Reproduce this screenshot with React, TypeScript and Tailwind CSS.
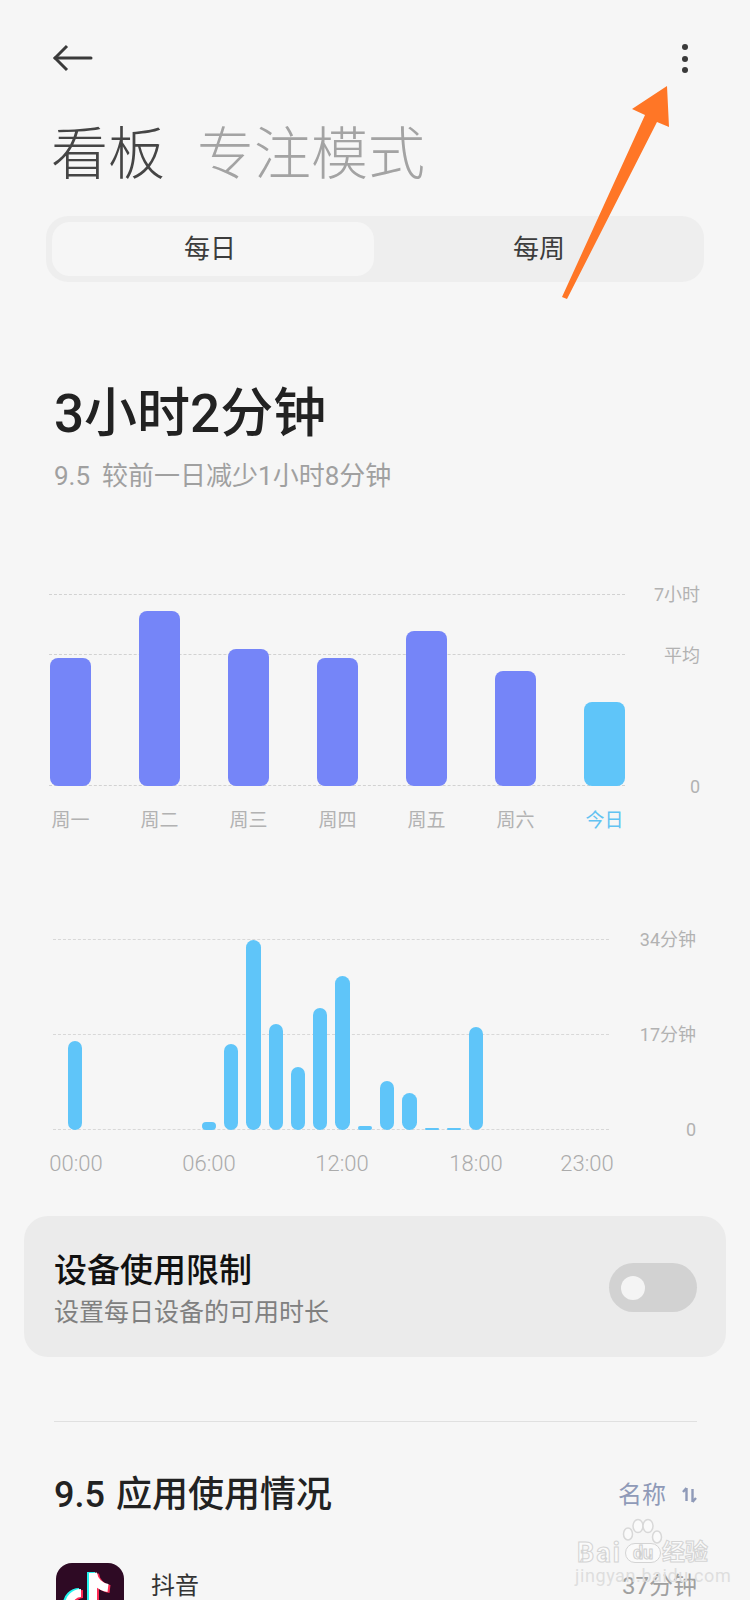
const sans = { fontFamily: 'Roboto, "Noto Sans CJK SC", sans-serif' };

const weekBars = [
  { nom: "周一", top: 658 },
  { nom: "周二", top: 611 },
  { nom: "周三", top: 649 },
  { nom: "周四", top: 658 },
  { nom: "周五", top: 631 },
  { nom: "周六", top: 671 },
  { nom: "今日", top: 702, today: true },
];

const hourBars = [89, 0, 0, 0, 0, 0, 8, 86, 190, 106, 63, 122, 154, 4, 49, 37, 2, 2, 103];

const timeLabels = [
  { t: "00:00", cls: "w-[60px] text-center" },
  { t: "06:00", cls: "ml-[73px] w-[60px] text-center" },
  { t: "12:00", cls: "ml-[73px] w-[60px] text-center" },
  { t: "18:00", cls: "ml-[74px] w-[60px] text-center" },
  { t: "23:00", cls: "ml-[51px] w-[60px] text-center" },
];

const App = () => {
  return (
    <div style={sans} className="relative h-[1600px] w-[750px] overflow-hidden bg-[#f6f6f6]">
      {/* top bar */}
      <div className="flex h-[123px] items-start justify-between pl-[53px] pr-[62px] pt-[44px]">
        <svg width="40" height="28" viewBox="0 0 40 28" fill="none" stroke="#3a3a3a" strokeWidth="3">
          <path d="M14 2 L2 14 L14 26" />
          <path d="M2 14 H38" strokeLinecap="round" />
        </svg>
        <div className="flex flex-col gap-[5.5px]">
          <span className="h-[6px] w-[6px] rounded-full bg-[#3a3a3a]"></span>
          <span className="h-[6px] w-[6px] rounded-full bg-[#3a3a3a]"></span>
          <span className="h-[6px] w-[6px] rounded-full bg-[#3a3a3a]"></span>
        </div>
      </div>

      {/* title */}
      <div className="flex h-[64px] items-center pl-[51px] text-[57px] font-light leading-[64px]">
        <span className="text-[#454545]">看板</span>
        <span className="ml-[32px] text-[#a3a3a3]">专注模式</span>
      </div>

      {/* tabs */}
      <div className="ml-[46px] mt-[29px] flex h-[66px] w-[658px] items-center rounded-[22px] bg-[#eeeeee] px-[6px]">
        <div className="flex h-[54px] w-[322px] items-center justify-center rounded-[18px] bg-[#f6f6f6] pr-[6px] text-[26px] text-[#3c3c3c]">
          每日
        </div>
        <div className="flex h-[54px] flex-1 items-center justify-center pl-[6px] text-[26px] text-[#3c3c3c]">每周</div>
      </div>

      {/* total */}
      <div className="ml-[54px] mt-[97px] text-[53px] font-medium leading-[70px] text-[#222222]">3小时2分钟</div>
      <div className="ml-[54px] mt-[10px] text-[26px] leading-[34px] text-[#a0a0a0]">
        <span className="mr-[12px]">9.5</span>较前一日减少1小时8分钟
      </div>

      {/* week chart */}
      <div className="ml-[49px] mt-[101px] flex">
        <div className="w-[576px]">
          <div className="relative h-[192px]">
            <div className="absolute left-0 right-0 top-0 border-t border-dashed border-[#d2d2d2]"></div>
            <div className="absolute left-0 right-0 top-[60px] border-t border-dashed border-[#d2d2d2]"></div>
            <div className="absolute bottom-0 left-0 right-0 border-t border-dashed border-[#d2d2d2]"></div>
            <div className="relative flex h-full items-end justify-between pl-px">
              {weekBars.map((data) => (
                <div
                  key={data.nom}
                  style={{ height: 786 - data.top }}
                  className={data.today ? "w-[41px] rounded-[8px] bg-[#5fc5f9]" : "w-[41px] rounded-[8px] bg-[#7585f8]"}
                ></div>
              ))}
            </div>
          </div>
          <div className="mt-[22px] flex justify-between pl-px">
            {weekBars.map((data) => (
              <div
                key={data.nom}
                className={
                  data.today
                    ? "w-[41px] whitespace-nowrap text-center text-[19px] leading-[26px] text-[#62c3f2]"
                    : "w-[41px] whitespace-nowrap text-center text-[19px] leading-[26px] text-[#b2b2b2]"
                }
              >
                {data.nom}
              </div>
            ))}
          </div>
        </div>
        <div className="ml-auto mr-[50px] mt-[-10px] flex flex-col items-end text-[18px] leading-[22px] text-[#b2b2b2]">
          <span>7小时</span>
          <span className="mt-[39px]">平均</span>
          <span className="mt-[109px]">0</span>
        </div>
      </div>

      {/* hour chart */}
      <div className="ml-[53px] mt-[105px] flex">
        <div className="w-[556px]">
          <div className="relative h-[191px]">
            <div className="absolute left-0 right-0 top-0 border-t border-dashed border-[#d8d8d8]"></div>
            <div className="absolute left-0 right-0 top-[95px] border-t border-dashed border-[#d8d8d8]"></div>
            <div className="absolute bottom-0 left-0 right-0 border-t border-dashed border-[#d8d8d8]"></div>
            <div className="relative flex h-full items-end gap-[7.9px] pl-[15px]">
              {hourBars.map((h, i) => (
                <div key={i} style={{ height: h }} className="w-[14.4px] rounded-full bg-[#5fc5f9]"></div>
              ))}
            </div>
          </div>
        </div>
        <div className="ml-auto mr-[54px] mt-[-10px] flex flex-col items-end text-[18px] leading-[22px] text-[#b2b2b2]">
          <span>34分钟</span>
          <span className="mt-[73px]">17分钟</span>
          <span className="mt-[73px]">0</span>
        </div>
      </div>
      <div className="ml-[46px] mt-[9px] flex text-[22px] font-light leading-[28px] text-[#ababab]">
        {timeLabels.map((data) => (
          <span key={data.t} className={data.cls}>
            {data.t}
          </span>
        ))}
      </div>

      {/* limit card */}
      <div className="ml-[24px] mt-[38px] flex h-[141px] w-[702px] items-center justify-between rounded-[24px] bg-[#ebebeb] pl-[30px] pr-[29px]">
        <div className="pt-[6px]">
          <p className="text-[33px] font-medium leading-[44px] text-[#111111]">设备使用限制</p>
          <p className="mt-[2px] text-[25px] leading-[36px] text-[#808080]">设置每日设备的可用时长</p>
        </div>
        <div className="mt-[2px] flex h-[49px] w-[88px] items-center rounded-full bg-[#d2d2d2] pl-[12px]">
          <span className="h-[24px] w-[24px] rounded-full bg-[#f4f4f4]"></span>
        </div>
      </div>

      <div className="ml-[54px] mt-[64px] h-px w-[643px] bg-[#e0e0e0]"></div>

      {/* app usage */}
      <div className="ml-[54px] mt-[48px] flex w-[643px] items-center justify-between">
        <span className="text-[36px] font-medium leading-[50px] text-[#222222]">
          <span className="mr-[11px]">9.5</span>应用使用情况
        </span>
        <div className="flex items-center gap-[16px] text-[24px] text-[#8f9ab8]">
          <span>名称</span>
          <svg width="15" height="16" viewBox="0 0 15 16" fill="none" stroke="#8f9ab8" strokeWidth="2.4">
            <path d="M4.5 1 V14 M4.5 1 L1 5" />
            <path d="M10.5 15 V2 M10.5 15 L14 11" />
          </svg>
        </div>
      </div>

      <div className="ml-[56px] mt-[43px] flex w-[641px] items-start">
        <div className="h-[68px] w-[68px] shrink-0 overflow-hidden rounded-[16px] bg-[#2e0a24]">
          <svg width="68" height="68" viewBox="0 0 68 68" fill="none" strokeWidth="8">
            <path d="M37 10 V42 a12 12 0 1 1 -12 -12" stroke="#25f4ee" transform="translate(-2 -1)" />
            <path d="M37 10 V42 a12 12 0 1 1 -12 -12 M37 10 c1 8 7 14 15 15" stroke="#fe2c55" transform="translate(2 1)" />
            <path d="M37 10 V42 a12 12 0 1 1 -12 -12 M37 10 c1 8 7 14 15 15" stroke="#ffffff" />
          </svg>
        </div>
        <span className="ml-[27px] mt-[9px] text-[24px] leading-[28px] text-[#333333]">抖音</span>
        <span className="ml-auto mt-[9px] text-[24px] leading-[28px] text-[#a0a0a0]">37分钟</span>
      </div>

      {/* arrow overlay */}
      <svg className="absolute left-0 top-0" width="750" height="320" viewBox="0 0 750 320">
        <path d="M667 86 L632 109 L645 115 L562 297 L567 299 L657 122 L669 127 Z" fill="#ff7626" />
      </svg>

      {/* watermark */}
      <div className="absolute left-[575px] top-[1518px] h-[66px] w-[134px]">
        <svg className="absolute left-[45px] top-0" width="46" height="30" viewBox="0 0 46 30" fill="#fafafa" stroke="#d8d8d8" strokeWidth="1.5">
          <ellipse cx="8" cy="16" rx="4.5" ry="6" />
          <ellipse cx="18" cy="8" rx="5" ry="6.5" />
          <ellipse cx="28" cy="8" rx="5" ry="6.5" />
          <ellipse cx="37" cy="19" rx="4.5" ry="6" />
        </svg>
        <span className="absolute left-[2px] top-[20px] text-[27px] font-bold leading-[30px] tracking-[2px] text-[#fafafa] [-webkit-text-stroke:1px_#d4d4d4]">
          Bai
        </span>
        <span className="absolute left-[50px] top-[25px] flex h-[20px] w-[36px] items-center justify-center rounded-[10px] border border-[#d4d4d4] bg-[#fafafa] text-[18px] font-bold leading-[18px] text-[#fafafa] [-webkit-text-stroke:1px_#cfcfcf]">
          du
        </span>
        <span className="absolute left-[87px] top-[20px] text-[23px] font-bold leading-[30px] text-[#fafafa] [-webkit-text-stroke:1px_#d4d4d4]">
          经验
        </span>
        <span className="absolute left-0 top-[48px] whitespace-nowrap text-[18px] leading-[20px] tracking-[0.6px] text-[#dedede]">jingyan.baidu.com</span>
      </div>
    </div>
  );
};

export default App;
